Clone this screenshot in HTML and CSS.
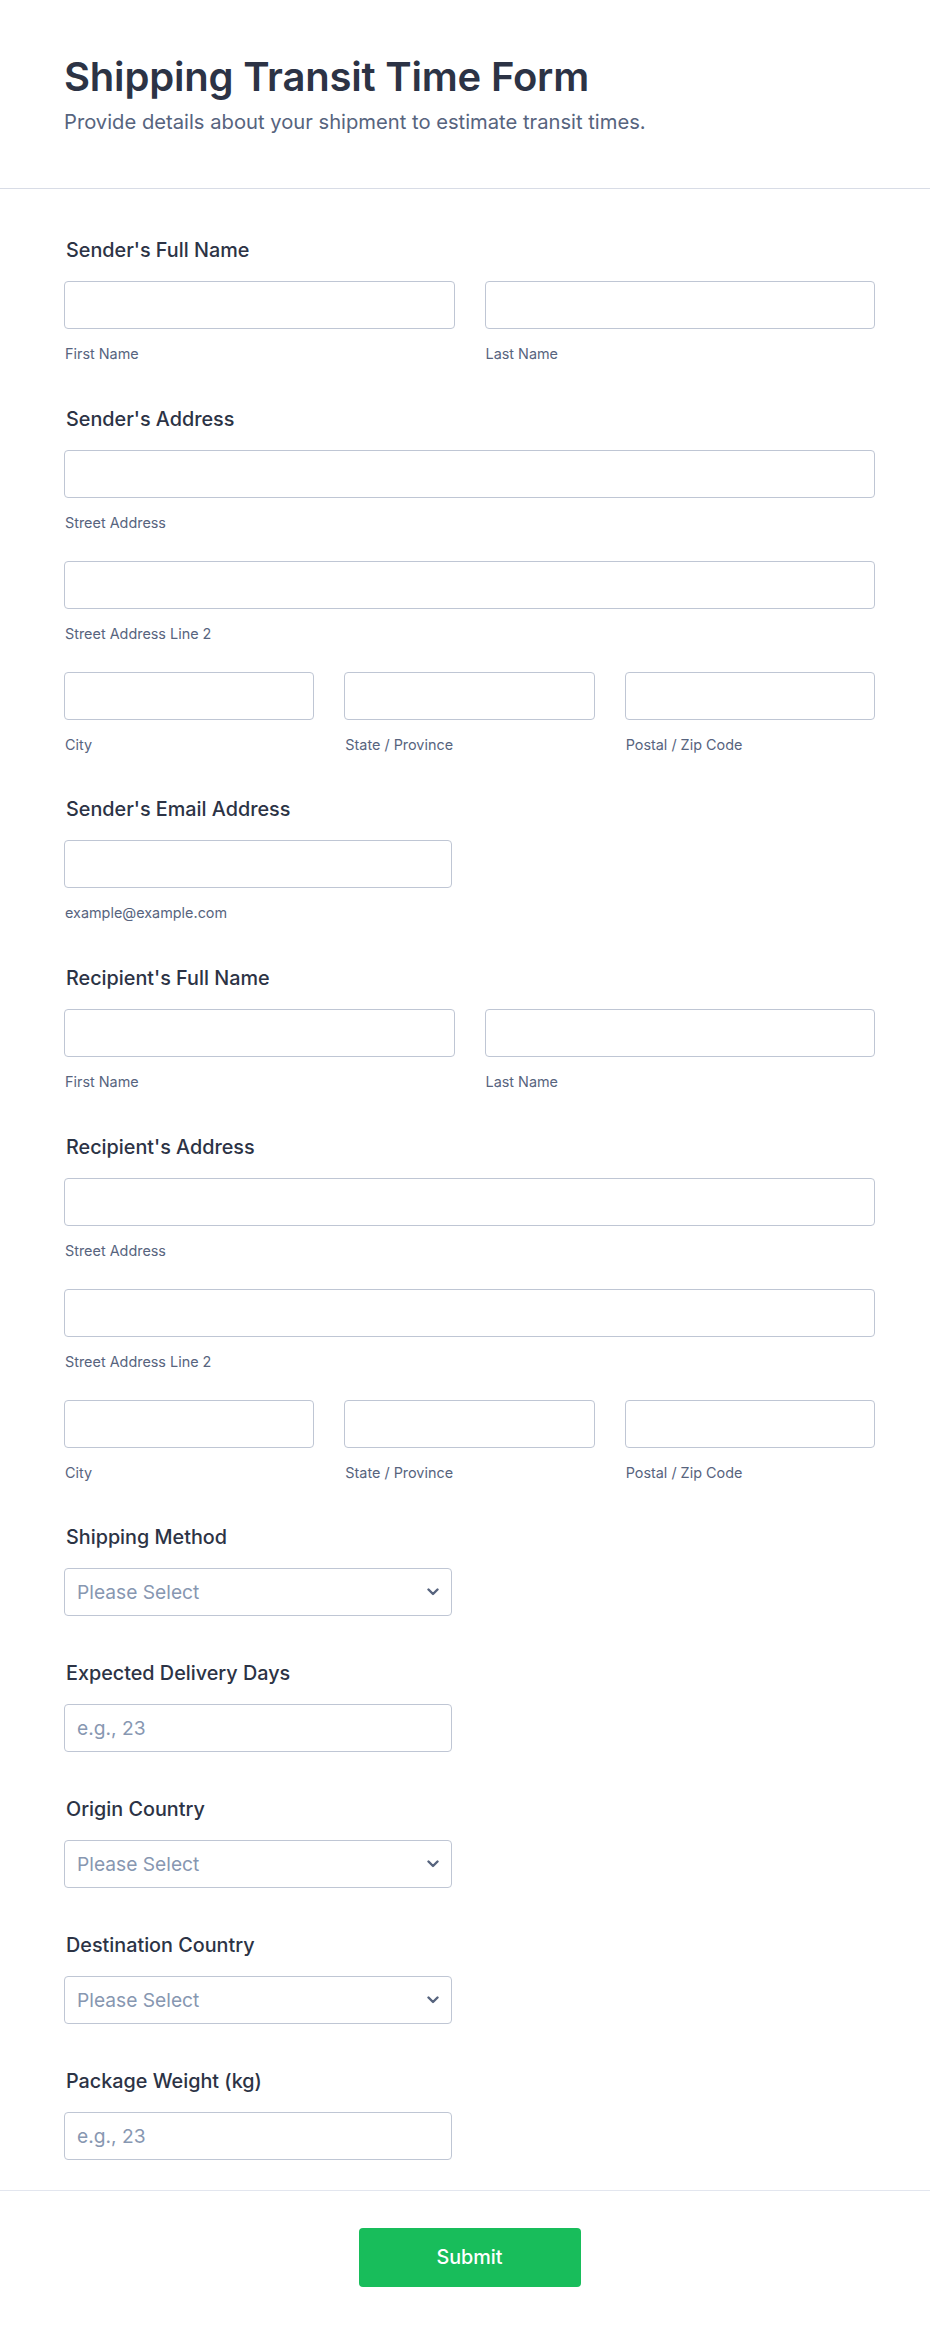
FILE: index.html
```html
<!DOCTYPE html>
<html lang="en">
<head>
    <meta charset="UTF-8">
    <meta name="viewport" content="width=device-width, initial-scale=1.0">
    <title>Shipping Transit Time Form</title>
    <link rel="stylesheet" href="styles.css">
</head>
<body>
    <form class="form">
        <header class="form-header">
            <h1 class="form-title">Shipping Transit Time Form</h1>
            <p class="form-subtitle">Provide details about your shipment to estimate transit times.</p>
        </header>

        <div class="form-body">
            <div class="field single">
                <label class="field-label">Sender's Full Name</label>
                <div class="row cols-2">
                    <div class="sub"><input class="input" type="text"><span class="sublabel">First Name</span></div>
                    <div class="sub"><input class="input" type="text"><span class="sublabel">Last Name</span></div>
                </div>
            </div>

            <div class="field">
                <label class="field-label">Sender's Address</label>
                <div class="row">
                    <div class="sub"><input class="input" type="text"><span class="sublabel">Street Address</span></div>
                </div>
                <div class="row">
                    <div class="sub"><input class="input" type="text"><span class="sublabel">Street Address Line 2</span></div>
                </div>
                <div class="row cols-3">
                    <div class="sub"><input class="input" type="text"><span class="sublabel">City</span></div>
                    <div class="sub"><input class="input" type="text"><span class="sublabel">State / Province</span></div>
                    <div class="sub"><input class="input" type="text"><span class="sublabel">Postal / Zip Code</span></div>
                </div>
            </div>

            <div class="field single">
                <label class="field-label">Sender's Email Address</label>
                <div class="sub half"><input class="input" type="email"><span class="sublabel">example@example.com</span></div>
            </div>

            <div class="field single">
                <label class="field-label">Recipient's Full Name</label>
                <div class="row cols-2">
                    <div class="sub"><input class="input" type="text"><span class="sublabel">First Name</span></div>
                    <div class="sub"><input class="input" type="text"><span class="sublabel">Last Name</span></div>
                </div>
            </div>

            <div class="field">
                <label class="field-label">Recipient's Address</label>
                <div class="row">
                    <div class="sub"><input class="input" type="text"><span class="sublabel">Street Address</span></div>
                </div>
                <div class="row">
                    <div class="sub"><input class="input" type="text"><span class="sublabel">Street Address Line 2</span></div>
                </div>
                <div class="row cols-3">
                    <div class="sub"><input class="input" type="text"><span class="sublabel">City</span></div>
                    <div class="sub"><input class="input" type="text"><span class="sublabel">State / Province</span></div>
                    <div class="sub"><input class="input" type="text"><span class="sublabel">Postal / Zip Code</span></div>
                </div>
            </div>

            <div class="field">
                <label class="field-label">Shipping Method</label>
                <div class="select-wrap half">
                    <select class="input select"><option>Please Select</option></select>
                    <svg class="chevron" width="12" height="8" viewBox="0 0 12 8"><path d="M1.5 1.5 6 6l4.5-4.5" fill="none" stroke="#57647e" stroke-width="2.4" stroke-linecap="round" stroke-linejoin="round"/></svg>
                </div>
            </div>

            <div class="field">
                <label class="field-label">Expected Delivery Days</label>
                <input class="input half" type="text" placeholder="e.g., 23">
            </div>

            <div class="field">
                <label class="field-label">Origin Country</label>
                <div class="select-wrap half">
                    <select class="input select"><option>Please Select</option></select>
                    <svg class="chevron" width="12" height="8" viewBox="0 0 12 8"><path d="M1.5 1.5 6 6l4.5-4.5" fill="none" stroke="#57647e" stroke-width="2.4" stroke-linecap="round" stroke-linejoin="round"/></svg>
                </div>
            </div>

            <div class="field">
                <label class="field-label">Destination Country</label>
                <div class="select-wrap half">
                    <select class="input select"><option>Please Select</option></select>
                    <svg class="chevron" width="12" height="8" viewBox="0 0 12 8"><path d="M1.5 1.5 6 6l4.5-4.5" fill="none" stroke="#57647e" stroke-width="2.4" stroke-linecap="round" stroke-linejoin="round"/></svg>
                </div>
            </div>

            <div class="field">
                <label class="field-label">Package Weight (kg)</label>
                <input class="input half" type="text" placeholder="e.g., 23">
            </div>
        </div>

        <div class="form-footer">
            <button class="submit" type="button">Submit</button>
        </div>
    </form>
</body>
</html>
```

FILE: styles.css
```css
* {
    box-sizing: border-box;
}
body {
    margin: 0;
    background-color: #fff;
    color: #2c3345;
    font-family: Inter, "Noto Sans", sans-serif;
}
.form-header {
    height: 189px;
    padding: 53px 55px 0 64px;
    border-bottom: 1px solid #d8dce6;
}
.form-title {
    margin: 0;
    font-size: 40px;
    line-height: 48px;
    font-weight: 600;
    letter-spacing: -0.2px;
    color: #2c3345;
}
.form-subtitle {
    margin: 9px 0 0;
    font-size: 20.2px;
    line-height: 24px;
    color: #57647e;
}
.form-body {
    padding: 27px 55px 6.5px 64px;
}
.field {
    padding: 22px 0 23px;
}
.field.single {
    padding-bottom: 24px;
}
.field-label {
    display: block;
    margin-bottom: 18px;
    padding-left: 2px;
    font-size: 19.8px;
    line-height: 25px;
    font-weight: 500;
    color: #2c3345;
}
.row {
    display: grid;
    gap: 30px;
}
.row + .row {
    margin-top: 31px;
}
.cols-2 {
    grid-template-columns: 1fr 1fr;
}
.cols-3 {
    grid-template-columns: 1fr 1fr 1fr;
}
.input {
    display: block;
    width: 100%;
    height: 48px;
    margin: 0;
    padding: 0 12px;
    border: 1px solid #bfc6d4;
    border-radius: 4px;
    background-color: #fff;
    font-family: inherit;
    font-size: 19.2px;
    color: #2c3345;
}
.input::placeholder {
    color: #8797b1;
}
.half {
    width: 388px;
}
.sublabel {
    display: block;
    margin-top: 17px;
    padding-left: 1px;
    font-size: 14.4px;
    line-height: 15px;
    color: #57647e;
}
.select-wrap {
    position: relative;
}
.select {
    appearance: none;
    -webkit-appearance: none;
    color: #8797b1;
}
.chevron {
    position: absolute;
    top: 20px;
    right: 13px;
    pointer-events: none;
}
.form-footer {
    padding: 37px 55px 49px 64px;
    border-top: 1px solid #e3e6ef;
    text-align: center;
}
.submit {
    width: 222px;
    height: 59px;
    border: none;
    border-radius: 4px;
    background-color: #18bd5b;
    color: #fff;
    font-family: inherit;
    font-size: 19.8px;
    font-weight: 500;
    cursor: pointer;
}
```
